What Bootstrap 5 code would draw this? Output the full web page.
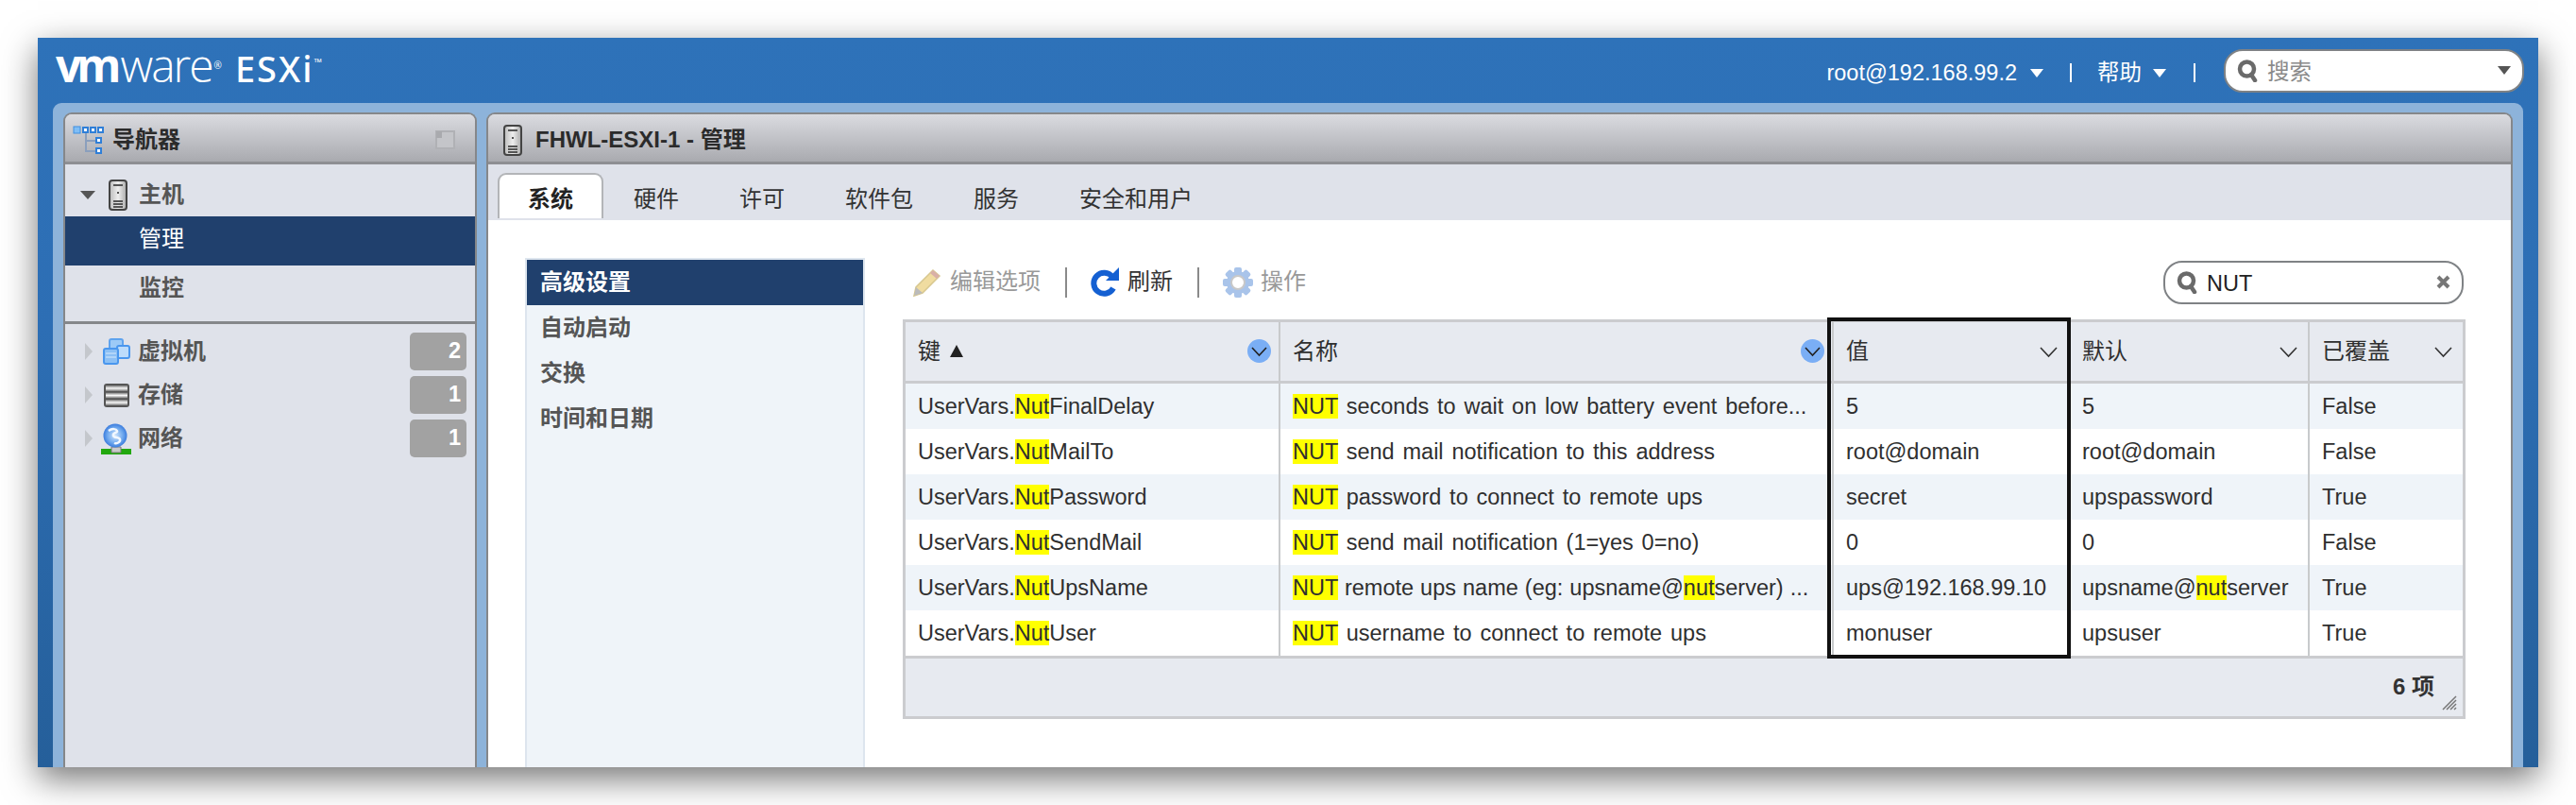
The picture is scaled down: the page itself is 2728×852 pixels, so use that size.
<!DOCTYPE html>
<html lang="zh-CN">
<head>
    <meta charset="UTF-8">
    <title>FHWL-ESXI-1 - VMware ESXi</title>
    <link href="https://cdn.jsdelivr.net/npm/bootstrap@5.3.2/dist/css/bootstrap.min.css" rel="stylesheet">
    <style>
        html, body { height: 852px; overflow: hidden; background: #fff; }
        body { padding: 40px; font: 24px/1.2 "Liberation Sans", "Noto Sans CJK SC", sans-serif; color: #333; }

        /* window */
        .esx-window { height: 772px; background: linear-gradient(180deg, #2e72b9 0%, #2d6eb4 40%, #255f9a 100%); box-shadow: 0 12px 34px rgba(0, 0, 0, .55); }
        .esx-top { height: 69px; padding: 0 15px 0 19px; color: #fff; flex: none; }
        .esx-logo { font-family: "Open Sans", sans-serif; font-size: 48px; line-height: 1; display: flex; align-items: baseline; margin-top: -12px; }
        .esx-logo b { font-weight: 700; letter-spacing: -5px; }
        .esx-logo i { font-style: normal; font-weight: 300; letter-spacing: -2px; margin-left: 4px; }
        .esx-logo .esx-reg { font-size: 10px; align-self: flex-start; margin: 19px 0 0 2px; }
        .esx-logo .esx-name { font-family: "Noto Sans", sans-serif; font-weight: 500; font-size: 38px; margin-left: 14px; letter-spacing: 2px; }
        .esx-logo .esx-tm { font-size: 11px; align-self: flex-start; margin-top: 15px; }
        .esx-user { font-size: 23.5px; padding-top: 5px; }
        .esx-caret { width: 0; height: 0; border: 7.5px solid transparent; border-top: 9px solid #fff; border-bottom: 0; display: inline-block; flex: none; }
        .esx-user .esx-caret { margin-left: 14px; }
        .esx-user .esx-caret.esx-caret-help { margin-left: 12px; }
        .esx-vsep { width: 2px; height: 20px; background: #fff; }
        .esx-vsep-a { margin: 0 27px 0 28px; }
        .esx-vsep-b { margin: 0 30px 0 29px; }
        .esx-search { width: 318px; height: 46px; border: 2px solid #7f8285; border-radius: 20px; background: #fff; padding: 0 12px; }
        .esx-search .form-control { border: 0; padding: 4px 0 0; font-size: 23.5px; box-shadow: none; background: transparent; color: #222; }
        .esx-search .form-control::placeholder { color: #8a8a8a; }
        .esx-dark-caret { border-top-color: #555; }

        .esx-stage { background: #8db3da; border-radius: 9px 9px 0 0; margin: 0 16px; padding: 10px 11px 0; gap: 10px; min-height: 0; }
        .esx-panel { border: 2px solid #85878a; border-bottom: 0; border-radius: 9px 9px 0 0; background: #dfe2ea; overflow: hidden; }
        .esx-nav-panel { width: 438px; flex: none; }
        .esx-head { height: 53px; flex: none; padding-top: 4px; font-weight: 700; color: #2b2b2b; background: linear-gradient(180deg, #dadbe0 0%, #a9aaaf 100%); border-bottom: 3px solid #8e8f93; }

        /* navigator */
        .esx-tree-row { height: 52px; padding: 0 0 3px 78px; font-weight: 700; color: #555; }
        .esx-tree-row.esx-sel { background: #20406d; color: #fff; font-weight: 400; }
        .esx-tree-host { height: 55px; padding: 10px 0 0 16px; font-weight: 700; color: #555; }
        .esx-tree-sep { border-top: 3px solid #85878a; margin-top: 7px; padding-top: 6px; }
        .esx-inv { height: 46px; padding: 0 9px 0 21px; font-weight: 700; color: #555; }
        .esx-tri-r { width: 0; height: 0; border: 9px solid transparent; border-left: 8px solid #c4c7cc; border-right: 0; }
        .esx-tri-d { width: 0; height: 0; border: 8px solid transparent; border-top: 9px solid #555; border-bottom: 0; }
        .esx-count { margin-left: auto; width: 60px; height: 40px; background: #a2a2a2; border-radius: 5px; color: #fff; font-size: 23.5px; font-weight: 700; text-align: right; padding: 7px 6px 0 0; line-height: 1.1; }

        /* tabs */
        .esx-tabs { height: 59px; padding: 9px 0 0 10px; flex: none; border: 0; gap: 0; }
        .esx-tabs .nav-link { color: #333; padding: 12px 30px 0; height: 48px; border: 2px solid transparent; border-bottom: 0; border-radius: 9px 9px 0 0; font-size: 24px; line-height: 1.2; margin: 0; background: transparent; }
        .esx-tabs .nav-link.active { background: #fff; border-color: #b3b5b8; color: #222; font-weight: 700; }
        .esx-content { background: #fff; padding: 40px 48px 0 39px; gap: 40px; min-height: 0; }

        /* side menu */
        .esx-side { width: 360px; flex: none; background: #eff4f9; border: 2px solid #dde5ee; border-bottom: 0; border-radius: 0; padding: 0; }
        .esx-side .list-group-item { background: transparent; border: 0; height: 48px; padding: 10px 14px 0; font-weight: 700; color: #555; font-size: 24px; line-height: 1.2; border-radius: 0; }
        .esx-side .list-group-item.active { background: #20406d; color: #fff; }

        /* toolbar */
        .esx-toolbar { height: 65px; padding-bottom: 14px; width: 1655px; }
        .esx-tool { color: #999; }
        .esx-tool-first { margin-left: 10px; }
        .esx-tool.esx-on { color: #333; }
        .esx-tool-sep { width: 2px; height: 32px; background: #8a8a8a; margin: 0 25px 0 26px; }
        .esx-filter { margin-left: auto; margin-right: 2px; width: 318px; }

        /* grid */
        .esx-grid-wrap { width: 1655px; }
        .esx-grid { table-layout: fixed; width: 1655px; margin: 0; border-collapse: separate; border-spacing: 0; border: 3px solid #cbcccf; border-bottom: 0; font-size: 23.5px; }
        .esx-grid th, .esx-grid td { border: 0; border-right: 2px solid #c8cacc; padding: 0 0 0 13px; vertical-align: middle; white-space: nowrap; overflow: hidden; text-overflow: ellipsis; color: #2f2f2f; font-weight: 400; box-shadow: none; }
        .esx-grid th { height: 65px; background: #e7eaf0; border-bottom: 3px solid #cbcccf; font-size: 24px; }
        .esx-grid td { height: 48px; background: #fff; }
        .esx-grid tr:nth-child(odd) td { background: #eff4f9; }
        .esx-grid th:last-child, .esx-grid td:last-child { border-right: 0; }
        .esx-grid td:nth-child(2) { word-spacing: 2.3px; }
        .esx-grid tr:nth-child(5) td:nth-child(2) { word-spacing: .5px; }
        .esx-hl { background: #ff0; }
        .esx-sort-up { width: 0; height: 0; border: 7px solid transparent; border-bottom: 13px solid #222; border-top: 0; margin-left: 10px; }
        .esx-chev { width: 25px; height: 25px; margin-right: 8px; border-radius: 50%; flex: none; }
        .esx-chev.esx-act { background: #7aaef5; }
        .esx-foot { height: 67px; width: 1655px; background: #e7eaf0; border: 3px solid #cbcccf; font-weight: 700; padding: 0 30px 0 0; }
        .esx-grip { position: absolute; right: 6px; bottom: 6px; }
        .esx-mark { position: absolute; left: 979px; top: -2px; width: 258px; height: 361px; border: 4px solid #111; pointer-events: none; }
    </style>
</head>
<body>
<div class="esx-window d-flex flex-column">

    <!-- top bar -->
    <header class="esx-top d-flex align-items-center">
        <div class="esx-logo"><b>vm</b><i>ware</i><span class="esx-reg">®</span><span class="esx-name">ESXi</span><span class="esx-tm">™</span></div>
        <div class="esx-user d-flex align-items-center ms-auto">
            <span>root@192.168.99.2</span>
            <span class="esx-caret"></span>
            <span class="esx-vsep esx-vsep-a"></span>
            <span>帮助</span>
            <span class="esx-caret esx-caret-help"></span>
            <span class="esx-vsep esx-vsep-b"></span>
        </div>
        <div class="esx-search d-flex align-items-center gap-2">
            <svg width="24" height="24" viewBox="0 0 24 24" style="flex:none"><circle cx="10.5" cy="10" r="7.5" fill="none" stroke="#6a6a6a" stroke-width="4.5"/><path d="M15 16l4 6" stroke="#6a6a6a" stroke-width="4.5" stroke-linecap="round"/></svg>
            <input class="form-control" type="text" placeholder="搜索">
            <span class="esx-caret esx-dark-caret"></span>
        </div>
    </header>

    <div class="esx-stage d-flex flex-grow-1">

        <!-- navigator -->
        <aside class="esx-panel esx-nav-panel d-flex flex-column">
            <div class="esx-head d-flex align-items-center">
                <svg class="ms-2" width="34" height="32" viewBox="0 0 34 32" style="margin-right:8px">
                    <path d="M14 6v22h11M14 17h11" fill="none" stroke="#8a9fbd" stroke-width="2"/>
                    <rect x="1" y="2" width="7" height="7" fill="#7fbdf5" stroke="#3f8fe0"/>
                    <g fill="#fff" stroke="#2f7fd8" stroke-width="2"><rect x="11" y="3" width="5" height="5"/><rect x="19" y="3" width="5" height="5"/><rect x="27" y="3" width="5" height="5"/><rect x="25" y="14" width="5" height="5"/><rect x="25" y="25" width="5" height="5"/></g>
                </svg>
                <span>导航器</span>
                <svg class="ms-auto" style="margin-right:21px" width="21" height="20" viewBox="0 0 21 20"><path d="M1 1h19v18H1z" fill="#c4c5c9" stroke="#b0b1b5" stroke-width="2"/><path d="M1 1h6v7H1z" fill="#a9aaae"/></svg>
            </div>
            <div class="esx-tree-host d-flex align-items-center">
                <span class="esx-tri-d"></span>
                <svg style="margin:0 12px 0 14px" width="20" height="33" viewBox="0 0 20 33">
                    <defs><linearGradient id="srv" x1="0" x2="1" y1="0" y2="0"><stop offset="0" stop-color="#bbb"/><stop offset=".5" stop-color="#eee"/><stop offset="1" stop-color="#aaa"/></linearGradient></defs>
                    <rect x="1" y="1" width="18" height="31" rx="3" fill="url(#srv)" stroke="#444" stroke-width="2"/>
                    <path d="M5 6h10M5 23h10M5 26h10M5 29h10" stroke="#555" stroke-width="2"/><rect x="9" y="13" width="2" height="2" fill="#555"/>
                </svg>
                <span>主机</span>
            </div>
            <div class="esx-tree-row esx-sel d-flex align-items-center">管理</div>
            <div class="esx-tree-row d-flex align-items-center">监控</div>
            <div class="esx-tree-sep">
                <div class="esx-inv d-flex align-items-center">
                    <span class="esx-tri-r"></span>
                    <svg style="margin:0 8px 0 11px" width="29" height="28" viewBox="0 0 29 28">
                        <rect x="7" y="1" width="14" height="14" rx="2" fill="#9ccaf7" stroke="#5ea3ee" stroke-width="2"/>
                        <rect x="15" y="8" width="13" height="13" rx="2" fill="#bcdcfb" stroke="#4a97ee" stroke-width="2"/>
                        <rect x="1" y="11" width="15" height="16" rx="2" fill="#8cc0f5" stroke="#4a97ee" stroke-width="2"/>
                        <path d="M3 16h11M3 20h11" stroke="#d6e9fc"/>
                    </svg>
                    <span>虚拟机</span>
                    <span class="esx-count">2</span>
                </div>
                <div class="esx-inv d-flex align-items-center">
                    <span class="esx-tri-r"></span>
                    <svg style="margin:0 8px 0 11px" width="29" height="27" viewBox="0 0 29 27">
                        <defs><linearGradient id="disk" x1="0" x2="0" y1="0" y2="1"><stop offset="0" stop-color="#777"/><stop offset=".5" stop-color="#f8f8f8"/><stop offset="1" stop-color="#777"/></linearGradient></defs>
                        <rect x="1" y="1" width="27" height="25" rx="3" fill="#555"/>
                        <rect x="3" y="3" width="23" height="6" fill="url(#disk)"/><rect x="3" y="10.5" width="23" height="6" fill="url(#disk)"/><rect x="3" y="18" width="23" height="6" fill="url(#disk)"/>
                    </svg>
                    <span>存储</span>
                    <span class="esx-count">1</span>
                </div>
                <div class="esx-inv d-flex align-items-center">
                    <span class="esx-tri-r"></span>
                    <svg style="margin:0 6px 0 9px" width="33" height="33" viewBox="0 0 33 33">
                        <defs><radialGradient id="globe" cx=".5" cy=".5" r=".55"><stop offset="0" stop-color="#cfe4fb"/><stop offset=".6" stop-color="#6ea8ee"/><stop offset="1" stop-color="#2c6fd8"/></radialGradient></defs>
                        <rect x="0" y="27" width="32" height="6" fill="#22a80f"/>
                        <path d="M11 25h10v6H11z" fill="#c9c9c9" stroke="#777"/>
                        <circle cx="15" cy="13" r="12.5" fill="url(#globe)"/>
                        <path d="M8 8c4-3 8-2 9 0s-5 2-4 5 6 1 7 4-4 5-6 4" fill="none" stroke="#f2f8ff" stroke-width="2.5"/>
                    </svg>
                    <span>网络</span>
                    <span class="esx-count">1</span>
                </div>
            </div>
        </aside>

        <!-- main panel -->
        <main class="esx-panel d-flex flex-column flex-grow-1" style="min-width:0">
            <div class="esx-head d-flex align-items-center">
                <svg style="margin:0 14px 0 16px" width="20" height="33" viewBox="0 0 20 33">
                    <rect x="1" y="1" width="18" height="31" rx="3" fill="url(#srv)" stroke="#444" stroke-width="2"/>
                    <path d="M5 6h10M5 23h10M5 26h10M5 29h10" stroke="#555" stroke-width="2"/><rect x="9" y="13" width="2" height="2" fill="#555"/>
                </svg>
                <span>FHWL-ESXI-1 - 管理</span>
            </div>
            <ul class="nav esx-tabs">
                <li class="nav-item"><a class="nav-link active" href="#">系统</a></li>
                <li class="nav-item"><a class="nav-link" href="#">硬件</a></li>
                <li class="nav-item"><a class="nav-link" href="#">许可</a></li>
                <li class="nav-item"><a class="nav-link" href="#">软件包</a></li>
                <li class="nav-item"><a class="nav-link" href="#">服务</a></li>
                <li class="nav-item"><a class="nav-link" href="#">安全和用户</a></li>
            </ul>
            <div class="esx-content d-flex flex-grow-1">
                <div class="list-group esx-side">
                    <a class="list-group-item active" href="#">高级设置</a>
                    <a class="list-group-item" href="#">自动启动</a>
                    <a class="list-group-item" href="#">交换</a>
                    <a class="list-group-item" href="#">时间和日期</a>
                </div>
                <div>
                    <div class="esx-toolbar d-flex align-items-center">
                        <span class="esx-tool esx-tool-first d-flex align-items-center">
                            <svg class="me-2" width="32" height="32" viewBox="0 0 32 32">
                                <path d="M2 30l2-9L22 3l7 6-18 18z" fill="#f0dca0" stroke="#d8c890" stroke-width="1.5"/>
                                <path d="M22 3l7 6-3 3-7-6z" fill="#d9b0a8"/><path d="M2 30l2-9 7 6z" fill="#bbb"/>
                            </svg>
                            编辑选项
                        </span>
                        <span class="esx-tool-sep"></span>
                        <span class="esx-tool esx-on d-flex align-items-center">
                            <svg class="me-2" width="31" height="32" viewBox="0 0 31 32">
                                <path d="M23 10a11 11 0 1 0 1 12" fill="none" stroke="#1460d2" stroke-width="6"/>
                                <path d="M30 0v14H16z" fill="#1460d2"/>
                            </svg>
                            刷新
                        </span>
                        <span class="esx-tool-sep"></span>
                        <span class="esx-tool d-flex align-items-center">
                            <svg class="me-2" width="32" height="32" viewBox="0 0 32 32">
                                <g fill="#a9c4ea"><circle cx="16" cy="16" r="12"/><rect x="12" y="0" width="8" height="32" rx="2"/><rect x="0" y="12" width="32" height="8" rx="2"/><rect x="12" y="0" width="8" height="32" rx="2" transform="rotate(45 16 16)"/><rect x="12" y="0" width="8" height="32" rx="2" transform="rotate(-45 16 16)"/></g>
                                <circle cx="16" cy="16" r="7" fill="#fff" stroke="#c8c8c8" stroke-width="2"/>
                            </svg>
                            操作
                        </span>
                        <div class="esx-search esx-filter d-flex align-items-center gap-2">
                            <svg width="24" height="24" viewBox="0 0 24 24" style="flex:none"><circle cx="10.5" cy="10" r="7.5" fill="none" stroke="#6a6a6a" stroke-width="4.5"/><path d="M15 16l4 6" stroke="#6a6a6a" stroke-width="4.5" stroke-linecap="round"/></svg>
                            <input class="form-control" type="text" value="NUT">
                            <svg width="15" height="15" viewBox="0 0 15 15" style="flex:none"><path d="M2 2l11 11M13 2L2 13" stroke="#777" stroke-width="4"/></svg>
                        </div>
                    </div>
                    <div class="esx-grid-wrap position-relative">
                        <table class="table esx-grid">
                            <colgroup><col style="width:397px"><col style="width:586px"><col style="width:250px"><col style="width:254px"><col></colgroup>
                            <thead>
                                <tr>
                                    <th><div class="d-flex align-items-center"><span>键</span><span class="esx-sort-up"></span>
                                        <svg class="esx-chev esx-act ms-auto" viewBox="0 0 25 25"><path d="M5 9l7.5 8 7.5-8" fill="none" stroke="#222" stroke-width="1.6"/></svg></div></th>
                                    <th><div class="d-flex align-items-center"><span>名称</span>
                                        <svg class="esx-chev esx-act ms-auto" viewBox="0 0 25 25"><path d="M5 9l7.5 8 7.5-8" fill="none" stroke="#222" stroke-width="1.6"/></svg></div></th>
                                    <th><div class="d-flex align-items-center"><span>值</span>
                                        <svg class="esx-chev ms-auto" viewBox="0 0 25 25"><path d="M4 9l8.500 9 8.500-9" fill="none" stroke="#333" stroke-width="1.6"/></svg></div></th>
                                    <th><div class="d-flex align-items-center"><span>默认</span>
                                        <svg class="esx-chev ms-auto" viewBox="0 0 25 25"><path d="M4 9l8.500 9 8.500-9" fill="none" stroke="#333" stroke-width="1.6"/></svg></div></th>
                                    <th><div class="d-flex align-items-center"><span>已覆盖</span>
                                        <svg class="esx-chev ms-auto" viewBox="0 0 25 25"><path d="M4 9l8.500 9 8.500-9" fill="none" stroke="#333" stroke-width="1.6"/></svg></div></th>
                                </tr>
                            </thead>
                            <tbody>
                                <tr><td>UserVars.<span class="esx-hl">Nut</span>FinalDelay</td><td><span class="esx-hl">NUT</span> seconds to wait on low battery event before...</td><td>5</td><td>5</td><td>False</td></tr>
                                <tr><td>UserVars.<span class="esx-hl">Nut</span>MailTo</td><td><span class="esx-hl">NUT</span> send mail notification to this address</td><td>root@domain</td><td>root@domain</td><td>False</td></tr>
                                <tr><td>UserVars.<span class="esx-hl">Nut</span>Password</td><td><span class="esx-hl">NUT</span> password to connect to remote ups</td><td>secret</td><td>upspassword</td><td>True</td></tr>
                                <tr><td>UserVars.<span class="esx-hl">Nut</span>SendMail</td><td><span class="esx-hl">NUT</span> send mail notification (1=yes 0=no)</td><td>0</td><td>0</td><td>False</td></tr>
                                <tr><td>UserVars.<span class="esx-hl">Nut</span>UpsName</td><td><span class="esx-hl">NUT</span> remote ups name (eg: upsname@<span class="esx-hl">nut</span>server) ...</td><td>ups@192.168.99.10</td><td>upsname@<span class="esx-hl">nut</span>server</td><td>True</td></tr>
                                <tr><td>UserVars.<span class="esx-hl">Nut</span>User</td><td><span class="esx-hl">NUT</span> username to connect to remote ups</td><td>monuser</td><td>upsuser</td><td>True</td></tr>
                            </tbody>
                        </table>
                        <div class="esx-foot d-flex align-items-center justify-content-end position-relative">
                            <span>6 项</span>
                            <svg class="esx-grip" width="16" height="16" viewBox="0 0 16 16"><path d="M1 15L15 1M5 15L15 5M9 15l6-6M13 15l2-2" stroke="#777" stroke-width="1.5"/></svg>
                        </div>
                        <div class="esx-mark"></div>
                    </div>
                </div>
            </div>
        </main>
    </div>
</div>
<script src="https://cdn.jsdelivr.net/npm/bootstrap@5.3.2/dist/js/bootstrap.bundle.min.js"></script>
</body>
</html>
